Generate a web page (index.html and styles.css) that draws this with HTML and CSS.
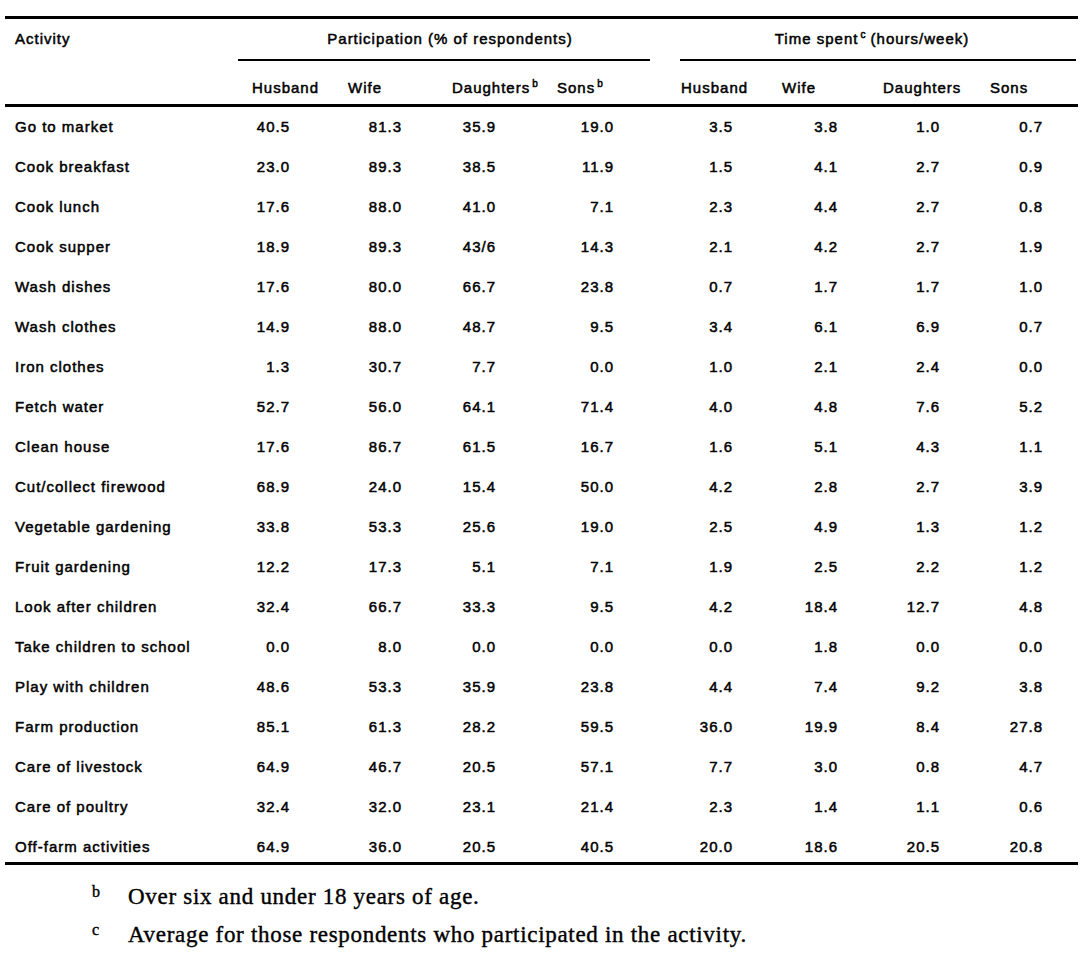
FILE: index.html
```html
<!DOCTYPE html>
<html lang="en">
<head>
<meta charset="utf-8">
<title>Household activities</title>
<link rel="stylesheet" href="styles.css">
</head>
<body>
<table class="tbl">
  <colgroup>
    <col class="w-act"><col class="w-2"><col class="w-3"><col class="w-4"><col class="w-5">
    <col class="w-6"><col class="w-7"><col class="w-8"><col class="w-9">
  </colgroup>
  <thead>
    <tr class="h1">
      <th class="act">Activity</th>
      <th colspan="4" class="grp"><div class="grp-line left">Participation (% of respondents)</div></th>
      <th colspan="4" class="grp"><div class="grp-line right">Time spent<sup>c</sup> (hours/week)</div></th>
    </tr>
    <tr class="h2">
      <th></th>
      <th>Husband</th><th>Wife</th><th>Daughters<sup>b</sup></th><th>Sons<sup>b</sup></th>
      <th>Husband</th><th>Wife</th><th>Daughters</th><th>Sons</th>
    </tr>
  </thead>
  <tbody>
    <tr><td>Go to market</td><td>40.5</td><td>81.3</td><td>35.9</td><td>19.0</td><td>3.5</td><td>3.8</td><td>1.0</td><td>0.7</td></tr>
    <tr><td>Cook breakfast</td><td>23.0</td><td>89.3</td><td>38.5</td><td>11.9</td><td>1.5</td><td>4.1</td><td>2.7</td><td>0.9</td></tr>
    <tr><td>Cook lunch</td><td>17.6</td><td>88.0</td><td>41.0</td><td>7.1</td><td>2.3</td><td>4.4</td><td>2.7</td><td>0.8</td></tr>
    <tr><td>Cook supper</td><td>18.9</td><td>89.3</td><td>43/6</td><td>14.3</td><td>2.1</td><td>4.2</td><td>2.7</td><td>1.9</td></tr>
    <tr><td>Wash dishes</td><td>17.6</td><td>80.0</td><td>66.7</td><td>23.8</td><td>0.7</td><td>1.7</td><td>1.7</td><td>1.0</td></tr>
    <tr><td>Wash clothes</td><td>14.9</td><td>88.0</td><td>48.7</td><td>9.5</td><td>3.4</td><td>6.1</td><td>6.9</td><td>0.7</td></tr>
    <tr><td>Iron clothes</td><td>1.3</td><td>30.7</td><td>7.7</td><td>0.0</td><td>1.0</td><td>2.1</td><td>2.4</td><td>0.0</td></tr>
    <tr><td>Fetch water</td><td>52.7</td><td>56.0</td><td>64.1</td><td>71.4</td><td>4.0</td><td>4.8</td><td>7.6</td><td>5.2</td></tr>
    <tr><td>Clean house</td><td>17.6</td><td>86.7</td><td>61.5</td><td>16.7</td><td>1.6</td><td>5.1</td><td>4.3</td><td>1.1</td></tr>
    <tr><td>Cut/collect firewood</td><td>68.9</td><td>24.0</td><td>15.4</td><td>50.0</td><td>4.2</td><td>2.8</td><td>2.7</td><td>3.9</td></tr>
    <tr><td>Vegetable gardening</td><td>33.8</td><td>53.3</td><td>25.6</td><td>19.0</td><td>2.5</td><td>4.9</td><td>1.3</td><td>1.2</td></tr>
    <tr><td>Fruit gardening</td><td>12.2</td><td>17.3</td><td>5.1</td><td>7.1</td><td>1.9</td><td>2.5</td><td>2.2</td><td>1.2</td></tr>
    <tr><td>Look after children</td><td>32.4</td><td>66.7</td><td>33.3</td><td>9.5</td><td>4.2</td><td>18.4</td><td>12.7</td><td>4.8</td></tr>
    <tr><td>Take children to school</td><td>0.0</td><td>8.0</td><td>0.0</td><td>0.0</td><td>0.0</td><td>1.8</td><td>0.0</td><td>0.0</td></tr>
    <tr><td>Play with children</td><td>48.6</td><td>53.3</td><td>35.9</td><td>23.8</td><td>4.4</td><td>7.4</td><td>9.2</td><td>3.8</td></tr>
    <tr><td>Farm production</td><td>85.1</td><td>61.3</td><td>28.2</td><td>59.5</td><td>36.0</td><td>19.9</td><td>8.4</td><td>27.8</td></tr>
    <tr><td>Care of livestock</td><td>64.9</td><td>46.7</td><td>20.5</td><td>57.1</td><td>7.7</td><td>3.0</td><td>0.8</td><td>4.7</td></tr>
    <tr><td>Care of poultry</td><td>32.4</td><td>32.0</td><td>23.1</td><td>21.4</td><td>2.3</td><td>1.4</td><td>1.1</td><td>0.6</td></tr>
    <tr class="last"><td>Off-farm activities</td><td>64.9</td><td>36.0</td><td>20.5</td><td>40.5</td><td>20.0</td><td>18.6</td><td>20.5</td><td>20.8</td></tr>
  </tbody>
</table>
<div class="notes">
  <p class="note"><span class="mark">b</span><span>Over six and under 18 years of age.</span></p>
  <p class="note"><span class="mark">c</span><span>Average for those respondents who participated in the activity.</span></p>
</div>
</body>
</html>
```
FILE: styles.css
```css
html, body {
  margin: 0;
  padding: 0;
  background: #fff;
  color: #000;
}

body {
  width: 1086px;
  height: 955px;
  overflow: hidden;
}

.tbl {
  margin: 16px 0 0 5px;
  width: 1073px;
  table-layout: fixed;
  border-collapse: separate;
  border-spacing: 0;
  border-top: 3px solid #000;
  border-bottom: 3px solid #000;
  font-family: "Liberation Sans", Arial, sans-serif;
  font-size: 15px;
  letter-spacing: 1px;
  -webkit-text-stroke: 0.5px #000;
  color: #000;
}

.w-act { width: 233px; }
.w-2 { width: 102px; }
.w-3 { width: 100px; }
.w-4 { width: 110px; }
.w-5 { width: 115px; }
.w-6 { width: 105px; }
.w-7 { width: 100px; }
.w-8 { width: 110px; }
.w-9 { width: 98px; }

th, td {
  padding: 0;
  font-weight: normal;
  line-height: 18px;
  white-space: nowrap;
  vertical-align: top;
}

sup {
  font-size: 10px;
  line-height: 0;
  vertical-align: 6px;
  letter-spacing: 0;
  margin-left: 2px;
}

/* header row 1 */
.h1 th {
  text-align: left;
}
.h1 .act {
  padding: 11px 0 0 10px;
}
.h1 .grp {
  text-align: center;
}
.grp-line {
  padding: 11px 0;
  border-bottom: 2px solid #000;
}
.grp-line.left {
  margin-right: 15px;
  padding-left: 12px;
}
.grp-line.right {
  margin-left: 15px;
  margin-right: 2px;
  padding-right: 12px;
}

/* header row 2 */
.h2 th {
  text-align: left;
  padding-top: 18px;
  padding-bottom: 7px;
  border-bottom: 3px solid #000;
}
.h2 th:nth-child(2) { padding-left: 14px; }
.h2 th:nth-child(3) { padding-left: 8px; }
.h2 th:nth-child(4) { padding-left: 12px; }
.h2 th:nth-child(5) { padding-left: 7px; }
.h2 th:nth-child(6) { padding-left: 16px; }
.h2 th:nth-child(7) { padding-left: 12px; }
.h2 th:nth-child(8) { padding-left: 13px; }
.h2 th:nth-child(9) { padding-left: 10px; }

/* body rows */
tbody td {
  height: 18px;
  padding-top: 11px;
  padding-bottom: 11px;
  text-align: right;
}
tbody tr.last td {
  padding-bottom: 6px;
}
tbody td:nth-child(1) { text-align: left; padding-left: 10px; }
tbody td:nth-child(2) { padding-right: 50px; }
tbody td:nth-child(3) { padding-right: 38px; }
tbody td:nth-child(4) { padding-right: 54px; }
tbody td:nth-child(5) { padding-right: 51px; }
tbody td:nth-child(6) { padding-right: 37px; }
tbody td:nth-child(7) { padding-right: 32px; }
tbody td:nth-child(8) { padding-right: 40px; }
tbody td:nth-child(9) { padding-right: 35px; }

/* footnotes */
.notes {
  margin-top: 13px;
  padding-left: 92px;
  font-family: "Liberation Serif", "Times New Roman", serif;
  font-size: 23px;
  letter-spacing: 0.7px;
  -webkit-text-stroke: 0.4px #000;
}
.note {
  margin: 0;
  line-height: 38px;
  display: flex;
}
.mark {
  width: 36px;
  font-size: 16px;
  letter-spacing: 0;
  position: relative;
  top: -5px;
}
```
